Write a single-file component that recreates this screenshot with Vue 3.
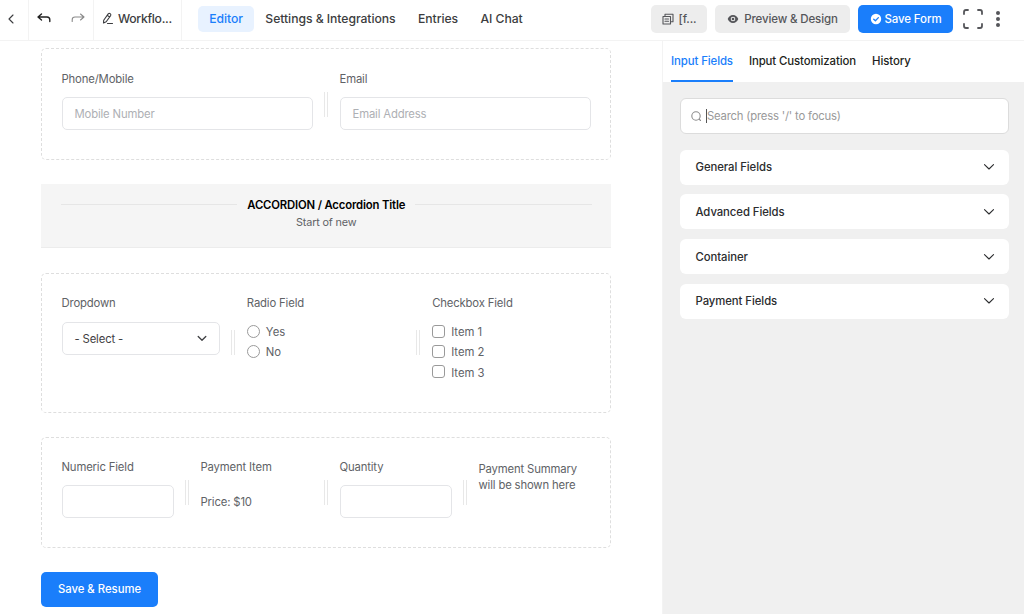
<template>
  <div class="editor">
    <header class="topbar">
      <div class="cell back">
        <svg width="8" height="10" viewBox="0 0 8 10"><path d="M6 1 2 5l4 4" /></svg>
      </div>
      <div class="cell history">
        <svg width="14" height="11" viewBox="0 0 14 11" class="undo"><path d="M4.500 1 1 4l3.500 3M1.200 4H10q2.800 0 2.800 2.800V8.500" /></svg>
        <svg width="14" height="11" viewBox="0 0 14 11" class="redo"><path d="M9.500 1 13 4 9.500 7M12.800 4H4Q1.200 4 1.200 6.800V8.500" /></svg>
      </div>
      <div class="cell title">
        <svg width="12" height="13" viewBox="0 0 12 13"><path d="M1.500 11 1.700 8.200 6.200 1.900q.9-1 2-.3 1.100.8.400 2L4.200 9.700zM5.200 3.300l2.500 1.800M5.500 11.500H10.500" /></svg>
        <span>Workflo...</span>
      </div>
      <nav class="nav">
        <a v-for="item in navItems" :key="item" class="nav-item" :class="{ active: item === 'Editor' }">{{ item }}</a>
      </nav>
      <div class="actions">
        <button class="btn shortcode">
          <svg width="12" height="12" viewBox="0 0 12 12"><path d="M1 3.500h7.500v7.500H1zM3 3.200V1.200h8v7.500H8.800M3 6h3.500M3 8.300h3.500" /></svg>
          <span>[f...</span>
        </button>
        <button class="btn preview">
          <svg width="12" height="10" viewBox="0 0 12 10"><path class="fill" fill-rule="evenodd" d="M6 1C3.400 1 1.500 2.700.7 5 1.500 7.300 3.400 9 6 9s4.500-1.700 5.300-4C10.500 2.700 8.600 1 6 1zm0 1.700a2.300 2.300 0 1 1 0 4.600 2.300 2.300 0 0 1 0-4.600z" /><circle class="fill" cx="6" cy="5" r="1.300" /></svg>
          <span>Preview &amp; Design</span>
        </button>
        <button class="btn save">
          <svg width="12" height="12" viewBox="0 0 12 12"><circle class="fill" cx="6" cy="6" r="5.200" /><path class="tick" d="M3.700 6.200 5.400 7.800 8.400 4.600" /></svg>
          <span>Save Form</span>
        </button>
        <svg class="expand" width="20" height="20" viewBox="0 0 20 20"><path d="M1 5V3q0-2 2-2h2M15 1H17q2 0 2 2v2M19 15V17q0 2-2 2h-2M5 19H3q-2 0-2-2v-2" /></svg>
        <svg class="more" width="6" height="18" viewBox="0 0 6 18"><circle cx="3" cy="3" r="2" /><circle cx="3" cy="9" r="2" /><circle cx="3" cy="15" r="2" /></svg>
      </div>
    </header>

    <div class="body">
      <main class="canvas">
        <section class="container two">
          <div class="col">
            <label>Phone/Mobile</label>
            <div class="input">Mobile Number</div>
          </div>
          <i class="splitter"></i>
          <div class="col">
            <label>Email</label>
            <div class="input">Email Address</div>
          </div>
        </section>

        <section class="accordion">
          <div class="accordion-title"><span>ACCORDION / Accordion Title</span></div>
          <div class="accordion-desc">Start of new</div>
        </section>

        <section class="container three">
          <div class="col">
            <label>Dropdown</label>
            <div class="input select">
              <span>- Select -</span>
              <svg width="10" height="7" viewBox="0 0 10 7"><path d="M1.200 1.500 5 5.300l3.800-3.800" /></svg>
            </div>
          </div>
          <i class="splitter"></i>
          <div class="col">
            <label>Radio Field</label>
            <div v-for="option in ['Yes', 'No']" :key="option" class="choice">
              <span class="mark round"></span>{{ option }}
            </div>
          </div>
          <i class="splitter"></i>
          <div class="col">
            <label>Checkbox Field</label>
            <div v-for="n in 3" :key="n" class="choice">
              <span class="mark"></span>Item {{ n }}
            </div>
          </div>
        </section>

        <section class="container four">
          <div class="col">
            <label>Numeric Field</label>
            <div class="input"></div>
          </div>
          <i class="splitter"></i>
          <div class="col">
            <label>Payment Item</label>
            <div class="price">Price: $10</div>
          </div>
          <i class="splitter"></i>
          <div class="col">
            <label>Quantity</label>
            <div class="input"></div>
          </div>
          <i class="splitter"></i>
          <div class="col">
            <p class="summary">Payment Summary<br />will be shown here</p>
          </div>
        </section>

        <button class="submit">Save &amp; Resume</button>
      </main>

      <aside class="sidebar">
        <div class="tabs">
          <a v-for="tab in tabs" :key="tab" class="tab" :class="{ active: tab === activeTab }" @click="activeTab = tab">{{ tab }}</a>
        </div>
        <div class="panel">
          <div class="search">
            <svg width="11" height="11" viewBox="0 0 11 11"><circle cx="5" cy="5" r="4.200" /><path d="M8.200 8.200l1.300 1.300" /></svg>
            <span class="caret"></span>
            <span class="hint">Search (press '/' to focus)</span>
          </div>
          <div v-for="group in groups" :key="group" class="group">
            <span>{{ group }}</span>
            <svg width="12" height="8" viewBox="0 0 12 8"><path d="M1.500 1.700 6 6l4.500-4.300" /></svg>
          </div>
        </div>
      </aside>
    </div>
  </div>
</template>

<script setup>
import { ref } from 'vue'

const navItems = ['Editor', 'Settings & Integrations', 'Entries', 'AI Chat']
const tabs = ['Input Fields', 'Input Customization', 'History']
const groups = ['General Fields', 'Advanced Fields', 'Container', 'Payment Fields']
const activeTab = ref('Input Fields')
</script>

<style>
body {
  margin: 0;
  overflow: hidden;
}
</style>

<style scoped>
.editor {
  width: 1024px;
  height: 614px;
  display: flex;
  flex-direction: column;
  overflow: hidden;
  background: #fff;
  font-family: Inter, "Liberation Sans", sans-serif;
  font-size: 11.3px;
  letter-spacing: -0.15px;
  color: #606266;
}

.editor * {
  box-sizing: border-box;
}

svg {
  fill: none;
  stroke: currentColor;
  stroke-width: 1.1;
  stroke-linecap: round;
  stroke-linejoin: round;
  flex: none;
}

button {
  font: inherit;
  letter-spacing: inherit;
  border: 0;
  margin: 0;
}

.fill {
  fill: currentColor;
  stroke: none;
}

/* top bar */
.topbar {
  height: 41px;
  flex: none;
  display: flex;
  align-items: stretch;
  border-bottom: 1px solid #f3f3f3;
  padding-bottom: 2px;
  font-weight: 500;
  font-size: 12.2px;
  letter-spacing: -0.05px;
  color: #3c3d40;
}

.cell {
  display: flex;
  align-items: center;
  border-right: 1px solid #f3f3f3;
  margin-bottom: -2px;
  padding-bottom: 3px;
}

.back {
  width: 29px;
  padding-left: 7px;
}

.history {
  width: 65px;
  padding-left: 8px;
  gap: 20px;
}

.undo {
  color: #222;
  stroke-width: 1.4;
}

.redo {
  color: #8a8a8a;
}

.title {
  width: 88px;
  padding-left: 8px;
  gap: 4px;
  letter-spacing: -0.3px;
}

.nav {
  display: flex;
  align-items: center;
  padding-left: 16px;
}

.nav-item {
  height: 26px;
  line-height: 26px;
  padding: 0 11.200px;
}

.nav-item.active {
  background: #e8f2ff;
  color: #1a7efb;
  border-radius: 5px;
}

.actions {
  margin-left: auto;
  display: flex;
  align-items: center;
  padding-right: 23px;
}

.btn {
  height: 28px;
  display: flex;
  align-items: center;
  justify-content: center;
  gap: 5px;
  padding: 0;
  border-radius: 5px;
  background: #ededed;
  color: #55565a;
  font-size: 11.5px;
  letter-spacing: -0.13px;
}

.shortcode {
  width: 56px;
  margin-right: 8px;
}

.preview {
  width: 135px;
  margin-right: 8px;
}

.save {
  width: 95px;
  margin-right: 10px;
  gap: 3px;
  background: #1a7efb;
  color: #fff;
}

.tick {
  stroke: #1a7efb;
  stroke-width: 1.3;
}

.expand {
  stroke-width: 1.8;
  color: #55565a;
  margin-right: 12px;
}

.more {
  fill: #55565a;
  stroke: none;
}

.body {
  flex: 1;
  display: flex;
  min-height: 0;
}

/* form canvas */
.canvas {
  width: 663px;
  padding: 7px 51.500px 0 41px;
  border-right: 1px solid #f3f3f3;
}

.container {
  display: flex;
  border: 1px dashed #dedede;
  border-radius: 5px;
  padding: 20px 19px 0 19.500px;
}

.two {
  height: 112px;
  margin-bottom: 24px;
}

.three {
  height: 140px;
  margin-bottom: 23.500px;
}

.four {
  height: 111px;
  margin-bottom: 24px;
}

.col {
  flex: 1 1 0;
  min-width: 0;
}

label {
  display: block;
  line-height: 18px;
  margin-bottom: 10px;
}

.two label {
  padding-top: 1px;
  margin-bottom: 9px;
}

.input {
  height: 33px;
  display: flex;
  align-items: center;
  border: 1px solid #e4e5e8;
  border-radius: 5px;
  padding: 0 12px;
  color: #aeb0b4;
}

.select {
  justify-content: space-between;
  color: #3f4043;
}

.select svg {
  stroke-width: 1.3;
}

.splitter {
  width: 4px;
  height: 25px;
  margin: 23px 12px 0 11px;
  border: solid #e8e8e8;
  border-width: 0 1px;
  flex: none;
}

.three .splitter {
  margin-top: 36px;
}

.four .splitter {
  margin-top: 22px;
}

.four .col > .input {
  margin-top: -0.5px;
}

.accordion {
  height: 64px;
  margin-bottom: 25px;
  padding: 11px 19px 0 20px;
  background: #f5f5f5;
  border-bottom: 1px solid #ececec;
  text-align: center;
}

.accordion-title {
  display: flex;
  align-items: center;
  gap: 10px;
  line-height: 19px;
  font-weight: 600;
  color: #000;
}

.accordion-title::before,
.accordion-title::after {
  content: '';
  flex: 1;
  height: 1px;
  background: #e6e6e6;
}

.accordion-title span {
  padding-top: 1px;
  margin-bottom: -1px;
}

.accordion-desc {
  line-height: 18px;
  font-size: 10.8px;
}

.choice {
  display: flex;
  align-items: center;
  height: 20.300px;
  gap: 6px;
  letter-spacing: 0;
}

.mark {
  width: 13px;
  height: 13px;
  margin-bottom: 2px;
  border: 1px solid #9a9a9a;
  border-radius: 3px;
}

.round {
  border-radius: 50%;
}

.price {
  line-height: 33px;
}

.summary {
  margin: 3px 0 0;
  line-height: 16px;
}

.submit {
  width: 117px;
  height: 35px;
  border-radius: 5px;
  background: #1a7efb;
  color: #fff;
  font-weight: 500;
  letter-spacing: 0;
}

/* sidebar */
.sidebar {
  flex: 1;
  background: #f0f0f0;
}

.tabs {
  height: 41px;
  display: flex;
  gap: 16px;
  padding-left: 8px;
  background: #fff;
  font-weight: 500;
  font-size: 11.4px;
  letter-spacing: -0.1px;
  color: #1e1f21;
}

.tab {
  line-height: 40px;
  border-bottom: 2px solid transparent;
}

.tab.active {
  color: #1a7efb;
  border-bottom-color: #1a7efb;
}

.panel {
  padding: 16px 15px 0 16.500px;
}

.search {
  height: 36px;
  display: flex;
  align-items: center;
  padding-left: 10.500px;
  margin-bottom: 15.500px;
  background: #fff;
  border: 1px solid #dcdcdc;
  border-radius: 6px;
  color: #8c8c8c;
}

.caret {
  width: 1px;
  height: 14px;
  margin-left: 4px;
  background: #555;
}

.hint {
  color: #999;
  letter-spacing: -0.19px;
}

.group {
  height: 35px;
  display: flex;
  align-items: center;
  justify-content: space-between;
  padding: 0 14px 0 16px;
  margin-bottom: 9.800px;
  background: #fff;
  border-radius: 6px;
  font-weight: 500;
  letter-spacing: -0.05px;
  color: #2b2c2e;
}
</style>
